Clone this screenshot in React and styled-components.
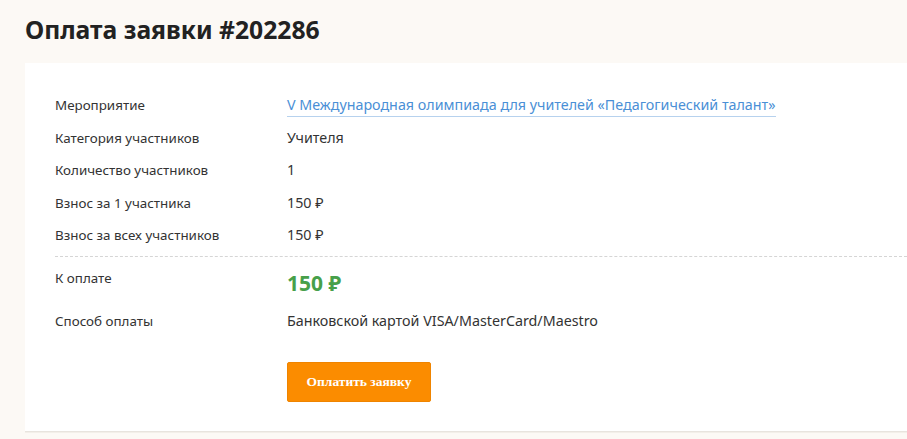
import React from 'react'
import styled, { createGlobalStyle } from 'styled-components'

const GlobalStyle = createGlobalStyle`
  html, body {
    margin: 0;
    padding: 0;
    background: #fcf9f5;
    font-family: "Noto Sans", "Open Sans", sans-serif;
    color: #333;
  }
`

const Page = styled.div`
  padding: 13px 0 0 25px;
  min-height: 439px;
  box-sizing: border-box;
  overflow: hidden;
`

const Title = styled.h1`
  margin: 0 0 16px;
  font-size: 24.7px;
  line-height: 34px;
  font-weight: 700;
  color: #222;
`

const Card = styled.div`
  background: #fff;
  padding: 26px 0 29px 30px;
  box-shadow: 0 1px 0 #e8e4de, 0 2px 0 #f3efe9;
`

const Rows = styled.div`
  display: grid;
  grid-template-columns: 232px 1fr;
`

const Label = styled.div`
  font-size: 13.4px;
  line-height: 32.5px;
  color: #333;
  padding-top: ${p => p.top || 0}px;
`

const Value = styled.div`
  font-size: 14.3px;
  line-height: 32.5px;
  color: #333;
  padding-top: ${p => p.top || 0}px;
`

const Link = styled.a`
  color: #4a8fd6;
  text-decoration: none;
  border-bottom: 1px solid #b7d2ee;
  padding-bottom: 2px;
`

const Divider = styled.div`
  grid-column: 1 / -1;
  border-top: 1px dashed #d5d5d5;
  margin: 4px 0 1px;
`

const Total = styled.div`
  font-size: 21px;
  font-weight: 700;
  color: #47a04a;
  line-height: 36px;
  padding-top: 7px;
`

const Actions = styled.div`
  padding: 25px 0 0 232px;
`

const PayButton = styled.button`
  width: 144px;
  height: 40px;
  background: #fb8c00;
  border: 1px solid #ef8400;
  border-radius: 2px;
  color: #fff;
  font-family: "Liberation Serif", "Times New Roman", serif;
  font-weight: 700;
  font-size: 13.5px;
  cursor: pointer;
`

const rows = [
  ['Категория участников', 'Учителя'],
  ['Количество участников', '1'],
  ['Взнос за 1 участника', '150 ₽'],
  ['Взнос за всех участников', '150 ₽'],
]

export default function App() {
  return (
    <Page>
      <GlobalStyle />
      <Title>Оплата заявки #202286</Title>
      <Card>
        <Rows>
          <Label>Мероприятие</Label>
          <Value>
            <Link href="#">V Международная олимпиада для учителей «Педагогический талант»</Link>
          </Value>
          {rows.map(([l, v]) => (
            <React.Fragment key={l}>
              <Label>{l}</Label>
              <Value>{v}</Value>
            </React.Fragment>
          ))}
          <Divider />
          <Label top={4}>К оплате</Label>
          <Total>150 ₽</Total>
          <Label top={4}>Способ оплаты</Label>
          <Value top={4}>Банковской картой VISA/MasterCard/Maestro</Value>
        </Rows>
        <Actions>
          <PayButton>Оплатить заявку</PayButton>
        </Actions>
      </Card>
    </Page>
  )
}
